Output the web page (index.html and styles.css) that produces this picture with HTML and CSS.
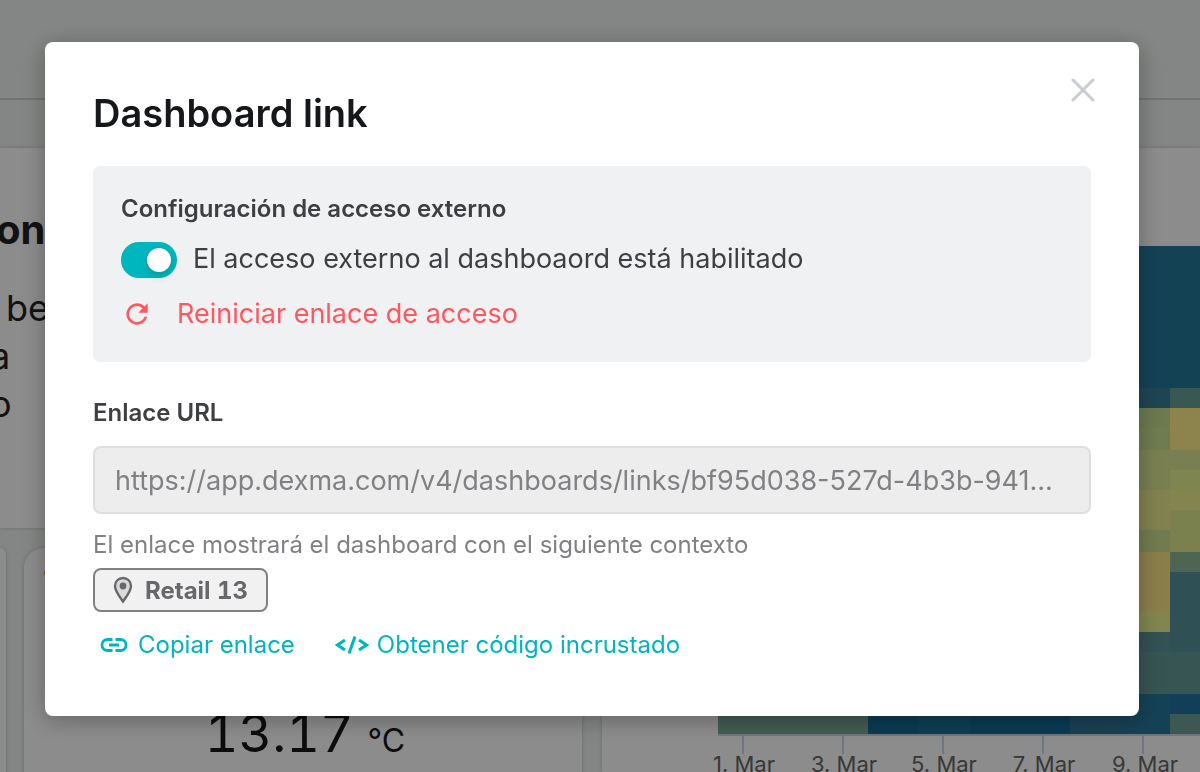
FILE: index.html
```html
<!DOCTYPE html>
<html lang="es">
<head>
    <meta charset="UTF-8">
    <meta name="viewport" content="width=device-width, initial-scale=1.0">
    <title>Dashboard link</title>
    <link rel="stylesheet" href="styles.css">
</head>
<body>

<!-- Dashboard behind the modal -->
<div class="dashboard">
    <div class="topbar"></div>
    <div class="toolbar"></div>
    <div class="widgets">
        <div class="left-column">
            <div class="widget text-widget">
                <h2>on</h2>
                <p class="first-line">be</p>
                <p>a</p>
                <p>o</p>
            </div>
            <div class="small-widgets">
                <div class="widget rounded edge"></div>
                <div class="widget rounded value-widget">
                    <span class="status-dot"></span>
                    <div class="value">13.17 <span class="unit">°C</span></div>
                </div>
            </div>
        </div>
        <div class="widget heatmap-widget">
            <svg class="heatmap" width="502" height="544" viewBox="0 0 502 544">
                <!-- 8. Mar -->
                <rect x="402" y="0" width="50" height="142" fill="#26789c"/>
                <rect x="402" y="142" width="50" height="20" fill="#387f9b"/>
                <rect x="402" y="162" width="50" height="20" fill="#c4de91"/>
                <rect x="402" y="182" width="50" height="22" fill="#cce193"/>
                <rect x="402" y="204" width="50" height="40" fill="#dce893"/>
                <rect x="402" y="244" width="50" height="40" fill="#edec90"/>
                <rect x="402" y="284" width="50" height="22" fill="#cfe191"/>
                <rect x="402" y="306" width="50" height="60" fill="#fde788"/>
                <rect x="402" y="366" width="50" height="20" fill="#ecf48f"/>
                <rect x="402" y="386" width="50" height="20" fill="#5b959b"/>
                <rect x="402" y="406" width="50" height="42" fill="#649b97"/>
                <rect x="402" y="448" width="50" height="40" fill="#26789c"/>
                <!-- 9. Mar -->
                <rect x="452" y="0" width="50" height="142" fill="#23789c"/>
                <rect x="452" y="142" width="50" height="20" fill="#6ba095"/>
                <rect x="452" y="162" width="50" height="42" fill="#fff08a"/>
                <rect x="452" y="204" width="50" height="20" fill="#dce893"/>
                <rect x="452" y="224" width="50" height="20" fill="#e7f291"/>
                <rect x="452" y="244" width="50" height="20" fill="#f0f08f"/>
                <rect x="452" y="264" width="50" height="42" fill="#deec91"/>
                <rect x="452" y="306" width="50" height="20" fill="#8cb895"/>
                <rect x="452" y="326" width="50" height="80" fill="#57939b"/>
                <rect x="452" y="406" width="50" height="42" fill="#649b97"/>
                <rect x="452" y="448" width="50" height="20" fill="#1f739e"/>
                <rect x="452" y="468" width="50" height="20" fill="#6fa095"/>
                <!-- last hour of the earlier days -->
                <rect x="0" y="468" width="150" height="20" fill="#7ba996"/>
                <rect x="150" y="468" width="50" height="20" fill="#146b97"/>
                <rect x="200" y="468" width="52" height="20" fill="#1b7199"/>
                <rect x="252" y="468" width="100" height="20" fill="#146b97"/>
                <rect x="352" y="468" width="50" height="20" fill="#2f7899"/>
                <path d="M0 489h502M25 488v20M125 488v20M225 488v20M325 488v20M425 488v20" stroke="#ccd6eb" stroke-width="2" fill="none"/>
                <g class="axis-labels">
                    <text x="26" y="526">1. Mar</text>
                    <text x="126" y="526">3. Mar</text>
                    <text x="226" y="526">5. Mar</text>
                    <text x="326" y="526">7. Mar</text>
                    <text x="427" y="526">9. Mar</text>
                </g>
            </svg>
        </div>
    </div>
</div>

<!-- Modal -->
<div class="overlay">
    <div class="modal" role="dialog" aria-labelledby="modal-title">
        <div class="modal-header">
            <h1 id="modal-title">Dashboard link</h1>
            <button class="close-button" aria-label="Cerrar">
                <svg width="24" height="24" viewBox="0 0 24 24"><path d="M2 2l20 20M22 2L2 22" stroke="#c9ccd0" stroke-width="3" stroke-linecap="round"/></svg>
            </button>
        </div>

        <div class="access-panel">
            <h2>Configuración de acceso externo</h2>
            <div class="switch-row">
                <input type="checkbox" id="external-access" class="switch" checked>
                <label for="external-access">El acceso externo al dashboaord está habilitado</label>
            </div>
            <button class="reset-button">
                <svg width="32" height="32" viewBox="0 0 24 24"><path d="M17.65 6.35A7.96 7.96 0 0 0 12 4a8 8 0 1 0 7.73 10h-2.08A6 6 0 1 1 12 6c1.66 0 3.14.69 4.22 1.78L13 11h7V4l-2.350 2.350z" fill="currentColor"/></svg>
                Reiniciar enlace de acceso
            </button>
        </div>

        <label class="url-label" for="link-url">Enlace URL</label>
        <input type="text" id="link-url" class="url-input" value="https://app.dexma.com/v4/dashboards/links/bf95d038-527d-4b3b-941..." readonly>
        <p class="help">El enlace mostrará el dashboard con el siguiente contexto</p>
        <div class="tag">
            <svg width="20" height="28" viewBox="0 0 20 28"><path d="M10 2C5.500 2 2 5.400 2 9.900c0 5.200 5.100 11.400 8 15.600 2.900-4.200 8-10.400 8-15.600C18 5.400 14.500 2 10 2z" fill="#d9d9da" stroke="#67686c" stroke-width="2.400"/><circle cx="10" cy="10" r="3.400" fill="#67686c"/></svg>
            Retail 13
        </div>
        <div class="actions">
            <button class="link-button">
                <svg width="28" height="16" viewBox="0 0 28 16"><path d="M12.500 2.500H7.500a5.500 5.500 0 0 0 0 11h5M15.500 2.500h5a5.500 5.500 0 0 1 0 11h-5M9 8h10" stroke="currentColor" stroke-width="2.800" fill="none"/></svg>
                Copiar enlace
            </button>
            <button class="link-button code">
                <svg width="34" height="20" viewBox="0 0 34 20"><path d="M10 5L2.500 10l7.500 5M24 5l7.500 5-7.500 5M20 1.500L14 18.500" stroke="currentColor" stroke-width="3" fill="none"/></svg>
                Obtener código incrustado
            </button>
        </div>
    </div>
</div>

</body>
</html>
```

FILE: styles.css
```css
* {
    box-sizing: border-box;
}
body {
    margin: 0;
    height: 100vh;
    overflow: hidden;
    background-color: #eff4f0;
    font-family: Inter, "Liberation Sans", sans-serif;
    color: #3e3f42;
}
h1, h2, p {
    margin: 0;
}
button {
    padding: 0;
    border: none;
    background: none;
    font-family: inherit;
    cursor: pointer;
}
svg {
    flex: none;
}

/* Dashboard */
.dashboard {
    display: flex;
    flex-direction: column;
    height: 100vh;
    overflow: hidden;
}
.topbar {
    flex: none;
    height: 100px;
    border-bottom: 2px solid #cfd2cf;
}
.toolbar {
    flex: none;
    height: 48px;
}
.widgets {
    flex: 1;
    min-height: 0;
    display: grid;
    grid-template-columns: 582px 1fr;
    gap: 20px;
}
.left-column {
    display: flex;
    flex-direction: column;
    gap: 20px;
    min-height: 0;
}
.widget {
    background-color: #fff;
    box-shadow: 0 0 4px rgba(0, 0, 0, 0.2);
    overflow: hidden;
}
.text-widget {
    flex: none;
    height: 380px;
    padding-top: 56px;
    color: #222;
}
.text-widget h2 {
    margin-left: -4px;
    font-size: 40px;
    line-height: 52px;
    font-weight: 700;
}
.text-widget p {
    margin-left: -10px;
    font-size: 36px;
    line-height: 48px;
}
.text-widget h2 + .first-line {
    margin-top: 28px;
    margin-left: 6px;
}
.small-widgets {
    flex: 1;
    display: grid;
    grid-template-columns: 6px 1fr;
    gap: 18px;
}
.rounded {
    border-radius: 20px 20px 0 0;
}
.edge {
    border-radius: 0 20px 0 0;
}
.value-widget {
    padding: 20px;
}
.status-dot {
    display: block;
    width: 10px;
    height: 10px;
    border-radius: 50%;
    background-color: #f5a623;
}
.value {
    padding-top: 120px;
    padding-left: 4px;
    text-align: center;
    font-size: 52px;
    line-height: 72px;
    font-variant-numeric: tabular-nums;
    color: #15171b;
}
.unit {
    font-size: 32px;
}
.heatmap-widget {
    padding-top: 98px;
    padding-left: 116px;
}
.heatmap {
    display: block;
    overflow: visible;
}
.axis-labels {
    font-size: 22px;
    fill: #666;
    text-anchor: middle;
}

/* Modal */
.overlay {
    position: fixed;
    inset: 0;
    display: flex;
    align-items: flex-start;
    padding: 42px 61px 0 45px;
    background-color: rgba(0, 0, 0, 0.45);
}
.modal {
    flex: 1;
    min-width: 0;
    padding: 48px 48px 55px;
    border-radius: 8px;
    background-color: #fff;
    box-shadow: 0 4px 24px rgba(0, 0, 0, 0.3);
}
.modal-header {
    display: flex;
    justify-content: space-between;
    align-items: flex-start;
    margin-bottom: 30px;
}
.modal-header h1 {
    font-size: 38px;
    line-height: 46px;
    font-weight: 600;
    color: #15171b;
}
.close-button {
    display: flex;
    margin: -12px -4px 0 0;
}
.access-panel {
    padding: 27px 28px 28px;
    border-radius: 8px;
    background-color: #f0f1f3;
}
.access-panel h2,
.url-label {
    display: block;
    font-size: 24px;
    line-height: 32px;
    font-weight: 600;
}
.switch-row {
    display: flex;
    align-items: center;
    gap: 16px;
    margin: 14px 0 13px;
    font-size: 27px;
    line-height: 40px;
}
.switch-row label {
    margin-bottom: 2px;
}
.switch {
    appearance: none;
    flex: none;
    display: flex;
    justify-content: flex-end;
    width: 56px;
    height: 36px;
    margin: 0;
    padding: 6px;
    border-radius: 18px;
    background-color: #00b6be;
}
.switch::before {
    content: "";
    width: 24px;
    height: 24px;
    border-radius: 50%;
    background-color: #fff;
    box-shadow: 0 4px 8px rgba(0, 35, 11, 0.2);
}
.reset-button {
    display: flex;
    align-items: center;
    gap: 24px;
    font-size: 27px;
    line-height: 40px;
    color: #ff5660;
}
.url-label {
    margin-top: 35px;
    margin-bottom: 17px;
}
.url-input {
    display: block;
    width: 100%;
    height: 68px;
    padding: 0 20px;
    border: 2px solid #dfdfdf;
    border-radius: 8px;
    background-color: #ededed;
    font-family: inherit;
    font-size: 27px;
    color: #808185;
}
.help {
    margin: 15px 0 7px;
    font-size: 24px;
    line-height: 32px;
    color: #808185;
}
.tag {
    display: flex;
    align-items: center;
    gap: 12px;
    width: fit-content;
    height: 44px;
    padding: 0 18px;
    border: 2px solid #808185;
    border-radius: 8px;
    background-color: #f1f1f1;
    font-size: 24px;
    font-weight: 700;
    font-variant-numeric: tabular-nums;
    color: #67686c;
}
.actions {
    display: flex;
    gap: 40px;
    margin-top: 17px;
    padding-left: 7px;
}
.link-button {
    display: flex;
    align-items: center;
    gap: 10px;
    font-size: 24px;
    line-height: 32px;
    color: #00b6be;
}
.link-button.code {
    gap: 8px;
}
```
